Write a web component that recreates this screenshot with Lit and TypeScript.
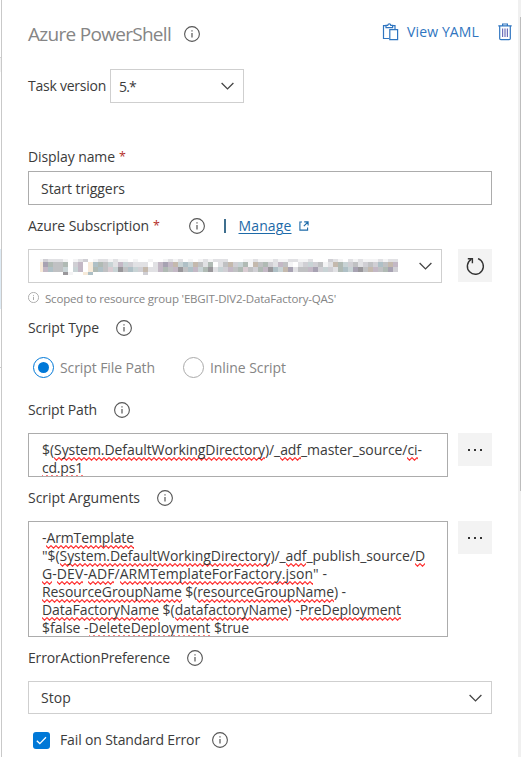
import { LitElement, html, css } from "lit";
import { customElement, property } from "lit/decorators.js";

/** A single line of text tracked so that it fills the given width. */
@customElement("fit-text")
class FitText extends LitElement {
  @property({ type: Number }) w = 0;
  static styles = css`
    :host { display: inline-block; white-space: pre; flex: none; }
  `;
  render() { return html`<slot></slot>`; }
  firstUpdated() {
    const n = (this.textContent || "").length;
    const natural = this.getBoundingClientRect().width;
    if (n && this.w) {
      this.style.letterSpacing = `${(this.w - natural) / n}px`;
      this.style.width = `${this.w}px`;
    }
  }
}

@customElement("info-icon")
class InfoIcon extends LitElement {
  static styles = css`
    :host { display: block; width: 16px; height: 16px; flex: none; color: #555; }
    svg { display: block; width: 100%; height: 100%; }
  `;
  render() {
    return html`<svg viewBox="0 0 16 16" fill="none" stroke="currentColor">
      <circle cx="8" cy="8" r="7.4" stroke-width="1.1"/>
      <path d="M8 7v4.6M8 4.3v1.3" stroke-width="1.2"/></svg>`;
  }
}

const chevron = html`<svg class="chev" viewBox="0 0 13 8" fill="none" stroke="#444" stroke-width="1.3"><path d="M.6 1l5.9 5.9L12.4 1"/></svg>`;

const palette: Record<string, string> = {
  a: "#a7a2b2", b: "#b0bab4", c: "#c0c1c3", d: "#d0cfd4", e: "#e1e1e4", f: "#f7ead9",
  g: "#c3b8c5", h: "#afc0c6", i: "#c4b9ad", j: "#99979b", k: "#c8d3d5", m: "#d9ccd2", w: "#ffffff", x: "#f4f4f5",
};
const mosaicRows = [
  "xdeeexwxedwxeexexxwxwwxwwxexewxwxexeeewwwxxexxxexxeexxewwwdexwexexxxexeex",
  "fabccbwdgwfhbckegkdeeewegagikhkicebwecidkbxicbdegcxwedkdcxeibkdcedcdhcigd",
  "fghcckwkgwfbhcmkjchkdieegbcgjchgkbjekdgcbmcdbgjhkiaeccgadkdebhkajcigcbadc",
  "wwwwwjxwwfhwwwwwwwwwwdwwwwwwwwwwwwwwwwwwwwwwwwwwwwwwwwwwwwwwwwwwwwwwwwww",
];

const lines1 = [
  { w: 380, p: ["$(", "*System.DefaultWorkingDirectory", ")/_", "*adf", "_master_source/", "*ci", "-"] },
  { w: 41, p: ["*cd.ps1"] },
];
const lines2 = [
  { w: 92, p: ["-", "*ArmTemplate"] },
  { w: 383, p: ["\"$(", "*System.DefaultWorkingDirectory", ")/_", "*adf", "_publish_source/", "*D"] },
  { w: 285, p: ["*G", "-", "*DEV", "-", "*ADF", "/", "*ARMTemplateForFactory.json", "\" -"] },
  { w: 304, p: ["*ResourceGroupName", " $(", "*resourceGroupName", ") -"] },
  { w: 359, p: ["*DataFactoryName", " $(", "*datafactoryName", ") -", "*PreDeployment"] },
  { w: 207, p: ["$false -", "*DeleteDeployment", " $true"] },
];

@customElement("app-root")
class AppRoot extends LitElement {
  static styles = css`
    :host { display: flex; width: 521px; height: 757px; overflow: hidden; background: #fff; color: #3b3b3b;
      font: 14px/20px "Open Sans", "Noto Sans", sans-serif; }
    * { box-sizing: border-box; }
    svg { display: block; flex: none; }
    .rail { width: 2px; flex: none; display: flex; flex-direction: column; border-right: 1px solid #c9c9c9; margin-right: 26px; }
    .rail i { display: block; }
    .r1 { height: 57px; } .r2 { height: 15px; background: #f3f3f3; border-top: 1px solid #d5d5d5; }
    .r3 { height: 177px; } .r4 { height: 60px; background: #deebf5; } .r5 { height: 58px; } .r6 { height: 1px; background: #ccc; }
    .form { width: 464px; flex: none; }
    .right { width: 29px; flex: none; display: flex; justify-content: flex-end; }
    .track { width: 3px; background: #f0f0f0; padding: 17px 0 0 2px; }
    .thumb { height: 474px; background: #bdbdbd; }
    .row { display: flex; align-items: center; height: 20px; }
    .head { height: 20px; margin-top: 24px; }
    .title { font-size: 19px; color: #858585; line-height: 20px; }
    .title + info-icon { margin-left: 13px; }
    .yaml { display: flex; align-items: center; gap: 8px; color: #2f75c0; margin: -4px 0 0 182px; }
    .trash { margin: -4px -20px 0 auto; }
    .version { height: 34px; margin-top: 25px; gap: 4px; }
    .box { display: flex; align-items: center; justify-content: space-between; height: 34px; border: 1px solid #cfcfcf; padding: 0 9px 0 12px; background: #fff; }
    .box.dark { border-color: #acacac; }
    .box fit-text { padding-top: 1px; }
    .v5 { width: 134px; padding-left: 8px; }
    .chev { width: 13px; height: 8px; }
    .star { color: #b5302b; margin-left: 4px; font-size: 12.5px; width: 7px; }
    .dn { margin-top: 43px; height: 20px; padding-top: 1px; }
    .dn + .box { margin-top: 5px; }
    .sub { margin-top: 11px; }
    .sub info-icon { margin-left: 29px; }
    .bar { width: 1.5px; height: 14px; background: #3f6f8e; margin: 0 13px 0 19px; }
    .link { color: #1d6aa8; text-decoration: underline; text-underline-offset: 2px; text-decoration-thickness: 1px; }
    .ext { margin-left: 7px; }
    .split { display: flex; justify-content: space-between; align-items: flex-start; }
    .s1 { margin-top: 13px; }
    .grow { width: 414px; }
    .btn { width: 34px; height: 33px; background: #f3f3f3; display: flex; align-items: center; justify-content: center; gap: 4px; }
    .btn i { width: 2px; height: 2px; background: #333; }
    .mosaic { display: grid; grid-template-columns: 3px repeat(71, 5px); grid-template-rows: 3px 5px 5px 3px; margin: 2px 0 0 -1px; width: 358px; }
    .scope { margin-top: 7px; height: 17px; font-size: 11.5px; color: #858585; }
    .scope info-icon { width: 11px; height: 11px; margin-right: 6px; margin-top: -3px; color: #999; }
    .st { margin-top: 11px; }
    .st info-icon, .lab info-icon { margin-left: 17px; }
    .radios { margin-top: 19px; height: 21px; color: #858585; padding-left: 5px; }
    .radio { width: 21px; height: 21px; border: 1px solid #aaa; border-radius: 50%; display: flex; align-items: center; justify-content: center; margin-right: 6px; flex: none; }
    .radio.on { border-color: #0078d7; }
    .radio.on::after { content: ""; width: 11px; height: 11px; border-radius: 50%; background: #0078d7; }
    .second { margin-left: 28px; }
    .sp { margin-top: 22px; }
    .area { width: 420px; border: 1px solid #acacac; padding: 7px 0 0 13px; overflow: hidden; }
    .a1 { height: 44px; } .a2 { height: 116px; }
    .lines { display: flex; flex-direction: column; align-items: flex-start; }
    .lines fit-text { height: 18px; line-height: 18px; }
    .s2 { margin-top: 13px; }
    .sa { margin-top: 11px; }
    .sq { display: inline-block; height: 21px; vertical-align: top; background: url("data:image/svg+xml,%3Csvg xmlns='http://www.w3.org/2000/svg' width='5' height='4'%3E%3Cpath d='M-2.5 3.2L0 .7L2.5 3.2L5 .7L7.5 3.2' fill='none' stroke='%23ff3030' stroke-width='1.2'/%3E%3C/svg%3E") repeat-x left 0 bottom 1px; }
    .ea { margin-top: 11px; }
    .ea + .box { margin-top: 13px; height: 33px; }
    .check { height: 20px; margin-top: 16px; padding-left: 5px; }
    .tick { width: 17px; height: 17px; border-radius: 3px; background: #0078d7; margin-right: 10px; }
    .check info-icon { margin-left: 12px; }
  `;

  private lines(ls: { w: number; p: string[] }[]) {
    return html`<div class="lines">${ls.map(l => html`<fit-text w=${l.w}>${l.p.map(s => s[0] === "*" ? html`<span class="sq">${s.slice(1)}</span>` : html`<span>${s}</span>`)}</fit-text>`)}</div>`;
  }

  render() {
    const dots = html`<div class="btn"><i></i><i></i><i></i></div>`;
    return html`
      <div class="rail"><i class="r1"></i><i class="r2"></i><i class="r3"></i><i class="r4"></i><i class="r5"></i><i class="r6"></i></div>
      <div class="form">
        <div class="row head">
          <fit-text class="title" w="143">Azure PowerShell</fit-text><info-icon></info-icon>
          <div class="yaml">
            <svg width="17" height="18" viewBox="0 0 17 18" fill="none" stroke="#2f75c0" stroke-width="1.2">
              <path d="M7 15.5H1.5V2.6H4M10.5 2.6H13V6M4 4.6V2.4H5.7Q6 .8 7.3.8T8.8 2.4H10.6V4.6Z"/><path d="M7.8 6.6H15.6V16.6H7.8Z" fill="#fff"/></svg>
            <fit-text w="72">View YAML</fit-text>
          </div>
          <svg class="trash" width="14" height="18" viewBox="0 0 14 18" fill="none" stroke="#2f75c0" stroke-width="1.2">
            <path d="M.3 2.8H13.7M4.6 2.6V1H9.4V2.6M1.7 3V15.4Q1.7 16.6 2.9 16.6H11.1Q12.3 16.6 12.3 15.4V3"/><path d="M4.6 5.5V14M7 5.5V14M9.4 5.5V14" stroke="#6d6fb8"/></svg>
        </div>
        <div class="row version"><fit-text w="78">Task version</fit-text><div class="box v5"><fit-text w="17">5.*</fit-text>${chevron}</div></div>
        <div class="row dn"><fit-text w="87">Display name</fit-text><span class="star">*</span></div>
        <div class="box dark"><fit-text w="84">Start triggers</fit-text></div>
        <div class="row sub"><fit-text w="121">Azure Subscription</fit-text><span class="star">*</span><info-icon></info-icon><span class="bar"></span>
          <fit-text class="link" w="53">Manage</fit-text>
          <svg class="ext" width="10" height="10" viewBox="0 0 10 10" fill="none" stroke="#1d6aa8" stroke-width="1.1"><path d="M3 1H.9V9.1H8.6V6.6M5.2.9H9.1V4.6M9 1L4.8 5.2"/></svg>
        </div>
        <div class="split s1">
          <div class="box grow"><div class="mosaic">${mosaicRows.map(r => [...r.padEnd(72, "w").slice(0, 72)].map(c => html`<b style="background:${palette[c]}"></b>`))}</div>${chevron}</div>
          <div class="btn"><svg width="19" height="20" viewBox="0 0 19 20" fill="none" stroke="#333" stroke-width="1.4"><path d="M12 2.7A8 8 0 1 1 5.2 3.4M1.8 2.7H6.4V7.3"/></svg></div>
        </div>
        <div class="row scope"><info-icon></info-icon><fit-text w="291">Scoped to resource group 'EBGIT-DIV2-DataFactory-QAS'</fit-text></div>
        <div class="row st"><fit-text w="71">Script Type</fit-text><info-icon></info-icon></div>
        <div class="row radios"><span class="radio on"></span><fit-text w="95">Script File Path</fit-text><span class="radio second"></span><fit-text w="76">Inline Script</fit-text></div>
        <div class="row lab sp"><fit-text w="69">Script Path</fit-text><info-icon></info-icon></div>
        <div class="split s2"><div class="area a1">${this.lines(lines1)}</div>${dots}</div>
        <div class="row lab sa"><fit-text w="112">Script Arguments</fit-text><info-icon></info-icon></div>
        <div class="split s2"><div class="area a2">${this.lines(lines2)}</div>${dots}</div>
        <div class="row lab ea"><fit-text w="142">ErrorActionPreference</fit-text><info-icon></info-icon></div>
        <div class="box"><fit-text w="30">Stop</fit-text>${chevron}</div>
        <div class="row check"><svg class="tick" viewBox="0 0 17 17" fill="none" stroke="#fff" stroke-width="1.3"><path d="M3.8 8.8L6.8 11.6L13 5.3"/></svg><fit-text w="140">Fail on Standard Error</fit-text><info-icon></info-icon></div>
      </div>
      <div class="right"><div class="track"><div class="thumb"></div></div></div>
    `;
  }
}
